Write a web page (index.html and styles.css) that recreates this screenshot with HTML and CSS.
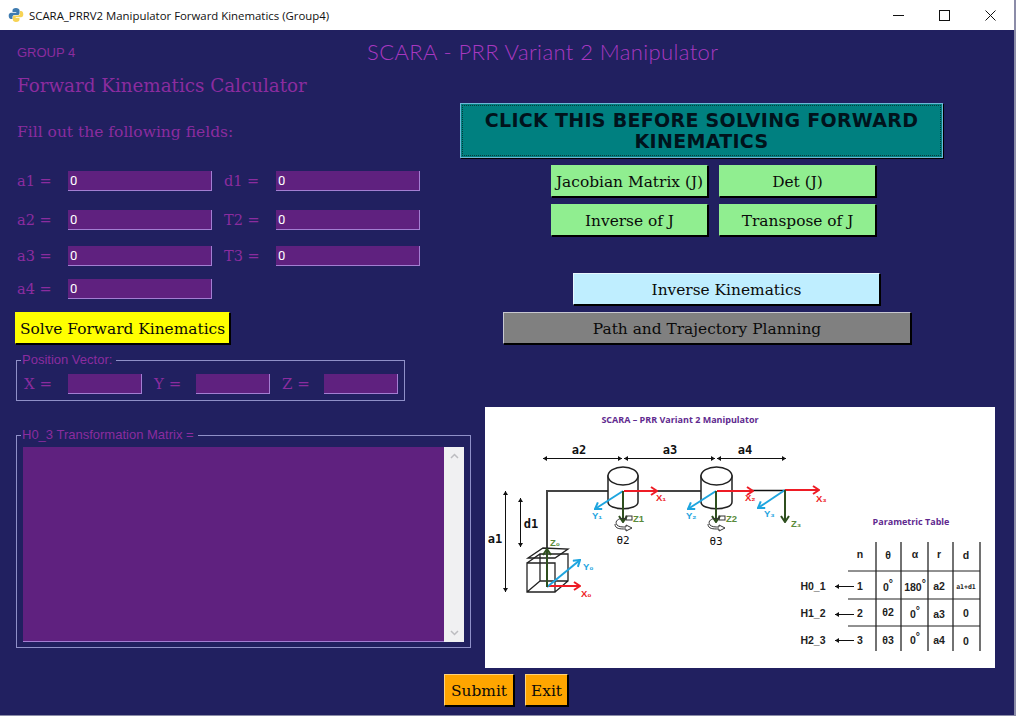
FILE: index.html
```html
<!DOCTYPE html>
<html lang="en">
<head>
    <meta charset="UTF-8">
    <title>SCARA_PRRV2 Manipulator Forward Kinematics (Group4)</title>
    <link rel="stylesheet" href="styles.css">
</head>
<body>
<div class="window">
    <div class="titlebar">
        <svg class="app-icon" width="16" height="16" viewBox="0 0 16 16">
            <path fill="#3f7cb0" d="M8 1C5.500 1 4.500 2 4.500 3.500V5H8.300V5.700H3C1.500 5.700 .7 7 .7 8.800S1.500 12 3 12H4.500V10C4.500 8.800 5.400 8 6.500 8H9.700C10.700 8 11.500 7.200 11.500 6.200V3.500C11.500 2 10 1 8 1Z"/>
            <path fill="#f7d354" d="M8 15C10.500 15 11.500 14 11.500 12.500V11H7.700V10.300H13C14.500 10.300 15.300 9 15.300 7.200S14.500 4 13 4H12V6.200C12 7.500 11 8.500 9.700 8.500H6.500C5.500 8.500 4.800 9.200 4.800 10.200V12.500C4.800 14 6 15 8 15Z"/>
        </svg>
        <span class="window-title">SCARA_PRRV2 Manipulator Forward Kinematics (Group4)</span>
        <div class="window-controls">
            <svg width="11" height="11" viewBox="0 0 11 11"><path d="M0 5.500H11" stroke="#111" fill="none"/></svg>
            <svg width="11" height="11" viewBox="0 0 11 11"><rect x=".5" y=".5" width="10" height="10" stroke="#111" fill="none"/></svg>
            <svg width="11" height="11" viewBox="0 0 11 11"><path d="M.5 .5L10.500 10.500M10.500 .5L.5 10.500" stroke="#111" fill="none"/></svg>
        </div>
    </div>

    <div class="content">
        <div class="header">
            <span class="group-label">GROUP 4</span>
            <h1 class="app-title">SCARA - PRR Variant 2 Manipulator</h1>
        </div>

        <div class="columns">
            <div class="left-col">
                <h2 class="calc-title">Forward Kinematics Calculator</h2>
                <p class="fill-text">Fill out the following fields:</p>

                <div class="field-row first">
                    <label class="field-label">a1 =</label>
                    <input class="field" type="text" value="0">
                    <label class="field-label second">d1 =</label>
                    <input class="field" type="text" value="0">
                </div>
                <div class="field-row row-2">
                    <label class="field-label">a2 =</label>
                    <input class="field" type="text" value="0">
                    <label class="field-label second">T2 =</label>
                    <input class="field" type="text" value="0">
                </div>
                <div class="field-row row-3">
                    <label class="field-label">a3 =</label>
                    <input class="field" type="text" value="0">
                    <label class="field-label second">T3 =</label>
                    <input class="field" type="text" value="0">
                </div>
                <div class="field-row row-4">
                    <label class="field-label">a4 =</label>
                    <input class="field" type="text" value="0">
                </div>

                <button class="btn btn-solve">Solve Forward Kinematics</button>

                <fieldset class="group-box position-box">
                    <legend>Position Vector:</legend>
                    <label class="vec-label">X =</label>
                    <input class="field vec-field" type="text">
                    <label class="vec-label">Y =</label>
                    <input class="field vec-field" type="text">
                    <label class="vec-label">Z =</label>
                    <input class="field vec-field" type="text">
                </fieldset>

                <fieldset class="group-box matrix-box">
                    <legend>H0_3 Transformation Matrix =</legend>
                    <div class="matrix-area"></div>
                    <div class="scrollbar">
                        <svg width="9" height="6" viewBox="0 0 9 6"><path d="M1 5L4.500 1.500L8 5" stroke="#bcbcc0" stroke-width="1.500" fill="none"/></svg>
                        <svg width="9" height="6" viewBox="0 0 9 6"><path d="M1 1L4.500 4.500L8 1" stroke="#bcbcc0" stroke-width="1.500" fill="none"/></svg>
                    </div>
                </fieldset>
            </div>

            <div class="right-col">
                <button class="btn btn-click">CLICK THIS BEFORE SOLVING FORWARD<br>KINEMATICS</button>
                <div class="jacobian-grid">
                    <button class="btn btn-green">Jacobian Matrix (J)</button>
                    <button class="btn btn-green">Det (J)</button>
                    <button class="btn btn-green">Inverse of J</button>
                    <button class="btn btn-green">Transpose of J</button>
                </div>
                <button class="btn btn-inverse">Inverse Kinematics</button>
                <button class="btn btn-path">Path and Trajectory Planning</button>

                <svg class="diagram" width="510" height="261" viewBox="0 0 510 261">
                    <defs>
                        <marker id="head-red" markerWidth="8" markerHeight="10" refX="7" refY="5" orient="auto" markerUnits="userSpaceOnUse"><path d="M1 1L7 5L1 9" fill="none" stroke="#ee1c25" stroke-width="2"/></marker>
                        <marker id="head-blue" markerWidth="8" markerHeight="10" refX="7" refY="5" orient="auto" markerUnits="userSpaceOnUse"><path d="M1 1L7 5L1 9" fill="none" stroke="#1ea5df" stroke-width="2"/></marker>
                        <marker id="head-green" markerWidth="8" markerHeight="10" refX="7" refY="5" orient="auto" markerUnits="userSpaceOnUse"><path d="M1 1L7 5L1 9" fill="none" stroke="#2f4f1f" stroke-width="2"/></marker>
                        <marker id="dim-end" markerWidth="5" markerHeight="5" refX="4" refY="2.500" orient="auto-start-reverse" markerUnits="userSpaceOnUse"><path d="M0 0L4 2.500L0 5Z" fill="#111"/></marker>
                    </defs>

                    <text class="dg-heading" x="195" y="16" text-anchor="middle">SCARA – PRR Variant 2 Manipulator</text>

                    <!-- dimension lines -->
                    <g stroke="#111" fill="none">
                        <path d="M58 51.500H137" marker-start="url(#dim-end)" marker-end="url(#dim-end)"/>
                        <path d="M139 51.500H230" marker-start="url(#dim-end)" marker-end="url(#dim-end)"/>
                        <path d="M232 51.500H301" marker-start="url(#dim-end)" marker-end="url(#dim-end)"/>
                        <path d="M35.500 91V140" marker-start="url(#dim-end)" marker-end="url(#dim-end)"/>
                        <path d="M20.500 84V185" marker-start="url(#dim-end)" marker-end="url(#dim-end)"/>
                    </g>
                    <text class="dg-dim" x="94" y="47" text-anchor="middle">a2</text>
                    <text class="dg-dim" x="185" y="47" text-anchor="middle">a3</text>
                    <text class="dg-dim" x="260" y="47" text-anchor="middle">a4</text>
                    <text class="dg-dim" x="46" y="121" text-anchor="middle">d1</text>
                    <text class="dg-dim" x="10" y="136" text-anchor="middle">a1</text>

                    <!-- arm -->
                    <path d="M62 180V84H123M153 84H216" stroke="#444" stroke-width="2" fill="none"/>
                    <path d="M266 83.500H300" stroke="#111" stroke-width="1.500" fill="none"/>

                    <!-- base -->
                    <g stroke="#222" stroke-width="1.300" fill="none">
                        <path d="M42 156H70V185H42ZM42 156L55 147H83V174L70 185M55 147V174H83M55 174L42 185"/>
                        <path d="M43 151L58 141L83 142L70 151Z"/>
                    </g>

                    <!-- joints -->
                    <g stroke="#222" stroke-width="1.500" fill="#fff">
                        <path d="M123 69V95C123 104 153 104 153 95V69Z"/>
                        <ellipse cx="138" cy="69" rx="15" ry="9"/>
                        <path d="M216 69V95C216 104 247 104 247 95V69Z"/>
                        <ellipse cx="231.500" cy="69" rx="15.500" ry="9"/>
                    </g>

                    <!-- frame axes -->
                    <g fill="none" stroke-width="2">
                        <path d="M62 179H95" stroke="#ee1c25" marker-end="url(#head-red)"/>
                        <path d="M62 180L95 153" stroke="#1ea5df" marker-end="url(#head-blue)"/>
                        <path d="M62 180V142" stroke="#2f4f1f" marker-end="url(#head-green)"/>
                        <path d="M139 84H172" stroke="#ee1c25" marker-end="url(#head-red)"/>
                        <path d="M138 84L110 102" stroke="#1ea5df" marker-end="url(#head-blue)"/>
                        <path d="M138 84V115" stroke="#2f4f1f" marker-end="url(#head-green)"/>
                        <path d="M232 84H268" stroke="#ee1c25" marker-end="url(#head-red)"/>
                        <path d="M231 84L203 102" stroke="#1ea5df" marker-end="url(#head-blue)"/>
                        <path d="M231 84V115" stroke="#2f4f1f" marker-end="url(#head-green)"/>
                        <path d="M300 83H334" stroke="#ee1c25" marker-end="url(#head-red)"/>
                        <path d="M300 83L273 101" stroke="#1ea5df" marker-end="url(#head-blue)"/>
                        <path d="M300 83V115" stroke="#2f4f1f" marker-end="url(#head-green)"/>
                    </g>

                    <!-- rotation marks -->
                    <g stroke="#333" fill="none" stroke-width="1">
                        <path d="M142 112C134 110 129 114 132 118C134 120 137 120 141 120V118L147 121L141 124V122C135 122 130 122 130 117"/>
                        <rect x="141" y="109" width="6" height="4"/>
                        <path d="M235 112C227 110 222 114 225 118C227 120 230 120 234 120V118L240 121L234 124V122C228 122 223 122 223 117"/>
                        <rect x="234" y="109" width="6" height="4"/>
                    </g>

                    <text class="dg-axis red" x="171" y="94">X₁</text>
                    <text class="dg-axis blue" x="107" y="112">Y₁</text>
                    <text class="dg-axis olive" x="148" y="115">Z1</text>
                    <text class="dg-axis red" x="260" y="94">X₂</text>
                    <text class="dg-axis blue" x="201" y="112">Y₂</text>
                    <text class="dg-axis olive" x="241" y="115">Z2</text>
                    <text class="dg-axis red" x="331" y="95">X₃</text>
                    <text class="dg-axis blue" x="279" y="110">Y₃</text>
                    <text class="dg-axis olive" x="306" y="120">Z₃</text>
                    <text class="dg-axis olive" x="65" y="139">Z₀</text>
                    <text class="dg-axis blue" x="98" y="163">Y₀</text>
                    <text class="dg-axis red" x="96" y="190">X₀</text>
                    <text class="dg-dim small" x="138" y="137" text-anchor="middle">θ2</text>
                    <text class="dg-dim small" x="231" y="138" text-anchor="middle">θ3</text>

                    <!-- parametric table -->
                    <text class="dg-heading" x="426" y="118" text-anchor="middle">Parametric Table</text>
                    <path d="M391 135V244M416 135V244M443 135V244M468 135V244M495 135V244" stroke="#444" stroke-width="1.500" fill="none"/>
                    <path d="M363 164H495M363 192H495M363 219H495" stroke="#222" fill="none"/>
                    <g class="dg-table" text-anchor="middle">
                        <text x="375" y="151">n</text>
                        <text x="403" y="152">θ</text>
                        <text x="430" y="151">α</text>
                        <text x="454" y="151">r</text>
                        <text x="481" y="152">d</text>
                        <text x="375" y="183">1</text>
                        <text x="403" y="184">0<tspan dy="-4">°</tspan></text>
                        <text x="430" y="184">180<tspan dy="-4">°</tspan></text>
                        <text x="454" y="183">a2</text>
                        <text class="dg-tiny" x="481" y="182">a1+d1</text>
                        <text x="375" y="210">2</text>
                        <text x="403" y="209">θ2</text>
                        <text x="430" y="211">0<tspan dy="-4">°</tspan></text>
                        <text x="454" y="211">a3</text>
                        <text x="481" y="210">0</text>
                        <text x="375" y="237">3</text>
                        <text x="403" y="237">θ3</text>
                        <text x="430" y="237">0<tspan dy="-4">°</tspan></text>
                        <text x="454" y="237">a4</text>
                        <text x="481" y="238">0</text>
                        <text x="328" y="183">H0_1</text>
                        <text x="328" y="210">H1_2</text>
                        <text x="328" y="237">H2_3</text>
                    </g>
                    <g stroke="#111" fill="none">
                        <path d="M369 179.500H350" marker-end="url(#dim-end)"/>
                        <path d="M369 207.500H350" marker-end="url(#dim-end)"/>
                        <path d="M369 233.500H350" marker-end="url(#dim-end)"/>
                    </g>
                </svg>
            </div>
        </div>

        <div class="footer">
            <button class="btn btn-orange">Submit</button>
            <button class="btn btn-orange">Exit</button>
        </div>
    </div>
</div>
</body>
</html>
```

FILE: styles.css
```css
html, body {
    margin: 0;
    height: 716px;
    overflow: hidden;
}
.window {
    display: flex;
    flex-direction: column;
    height: 716px;
    background-color: #212060;
    font-family: "Liberation Sans", sans-serif;
    border-right: 2px solid #8b8ca8;
    border-bottom: 1px solid #8b8ca8;
    box-sizing: border-box;
}
.titlebar {
    display: flex;
    align-items: center;
    height: 30px;
    flex-shrink: 0;
    background-color: #ffffff;
    padding-left: 8px;
}
.app-icon {
    margin-right: 5px;
}
.window-title {
    font-family: "Open Sans", sans-serif;
    font-size: 11.400px;
    color: #111;
    white-space: nowrap;
}
.window-controls {
    display: flex;
    gap: 35px;
    margin-left: auto;
    margin-right: 18px;
}
.content {
    flex: 1;
}
.header {
    display: flex;
    align-items: center;
    height: 44px;
    padding-left: 17px;
}
.group-label {
    width: 350px;
    font-family: "Liberation Sans", sans-serif;
    font-size: 13px;
    color: #8b2c9f;
}
.app-title {
    margin: 0 0 2px;
    font-family: "Lato", sans-serif;
    font-size: 22px;
    font-weight: 300;
    letter-spacing: .4px;
    color: #a838c0;
    white-space: nowrap;
}
.columns {
    display: flex;
}
.left-col {
    width: 460px;
    flex-shrink: 0;
    padding-left: 17px;
    box-sizing: border-box;
    color: #8b2c9f;
}
.calc-title {
    margin: 0;
    height: 24px;
    font-family: "DejaVu Serif", serif;
    font-size: 18.300px;
    line-height: 24px;
    font-weight: 400;
    white-space: nowrap;
}
.fill-text {
    margin: 23px 0 0;
    height: 22px;
    font-family: "DejaVu Serif", serif;
    font-size: 15.500px;
    line-height: 22px;
    white-space: nowrap;
}
.field-row {
    display: flex;
    align-items: center;
    height: 20px;
}
.field-row.first { margin-top: 28px; }
.field-row.row-2 { margin-top: 19px; }
.field-row.row-3 { margin-top: 16px; }
.field-row.row-4 { margin-top: 13px; }
.field-label {
    width: 51px;
    font-family: "DejaVu Serif", serif;
    font-size: 14.500px;
    white-space: nowrap;
}
.field-label.second {
    width: 52px;
    margin-left: 12px;
}
.field {
    width: 144px;
    height: 20px;
    box-sizing: border-box;
    padding: 0 0 0 2px;
    border: 0;
    border-right: 1px solid #a37ed2;
    border-bottom: 1px solid #a37ed2;
    background-color: #5f217f;
    color: #ffffff;
    font-family: "Roboto", sans-serif;
    font-size: 13px;
}
.btn {
    display: block;
    box-sizing: border-box;
    padding: 1px 0 0;
    border: 1px solid #000;
    border-top-color: #e8e8e8;
    border-left-color: #e8e8e8;
    box-shadow: 1px 1px 0 #000;
    font-family: "DejaVu Serif", serif;
    font-size: 15.400px;
    color: #0a0a0a;
    white-space: nowrap;
}
.btn-solve {
    width: 215px;
    height: 32px;
    margin: 13px 0 0 -2px;
    background-color: #ffff00;
    border-top-color: #ffff00;
    border-left-color: #ffff00;
}
.group-box {
    margin: 0;
    padding: 0;
    min-width: 0;
    border: 1px solid #8f90c8;
    box-sizing: border-box;
}
.group-box legend {
    margin-left: -3px;
    padding: 0 4px 0 1px;
    font-size: 13px;
    line-height: 14px;
    color: #8b2c9f;
}
.position-box {
    display: flex;
    align-items: center;
    width: 389px;
    height: 48px;
    margin: 9px 0 0 -1px;
    padding-left: 7px;
}
.vec-label {
    width: 44px;
    flex-shrink: 0;
    font-family: "DejaVu Serif", serif;
    font-size: 15px;
    white-space: nowrap;
}
.vec-label ~ .vec-label {
    width: 42px;
    margin-left: 12px;
}
.vec-field {
    width: 74px;
    flex-shrink: 0;
}
.matrix-box {
    display: flex;
    width: 455px;
    height: 220px;
    margin: 27px 0 0 -1px;
    padding: 5px 6px;
}
.matrix-box legend {
    margin-left: -2px;
}
.matrix-area {
    flex: 1;
    background-color: #5f217f;
    border-bottom: 1px solid #a37ed2;
}
.scrollbar {
    display: flex;
    flex-direction: column;
    justify-content: space-between;
    align-items: center;
    width: 20px;
    padding: 6px 0;
    box-sizing: border-box;
    background-color: #f0f0f2;
}
.right-col {
    flex: 1;
}
.btn-click {
    width: 483px;
    height: 55px;
    margin-top: 29px;
    background-color: #008080;
    border-color: #6fb6d6;
    outline: 1px dotted #0a3a3a;
    outline-offset: -3px;
    font-family: "DejaVu Sans", sans-serif;
    font-size: 19px;
    font-weight: 700;
    letter-spacing: .3px;
    line-height: 21px;
    color: #00131c;
}
.jacobian-grid {
    display: grid;
    grid-template-columns: 157px 157px;
    grid-auto-rows: 32px;
    gap: 7px 11px;
    margin: 7px 0 0 91px;
}
.btn-green {
    background-color: #90ee90;
    border-color: #90ee90;
    border-right-color: #000;
    border-bottom-color: #000;
}
.btn-inverse {
    width: 307px;
    height: 32px;
    margin: 37px 0 0 113px;
    background-color: #bfeeff;
    border-color: #e8f8ff;
    border-right-color: #000;
    border-bottom-color: #000;
}
.btn-path {
    width: 408px;
    height: 32px;
    margin: 7px 0 0 43px;
    background-color: #808080;
    border-color: #c8c8d0;
    border-right-color: #000;
    border-bottom-color: #000;
}
.diagram {
    display: block;
    margin: 63px 0 0 25px;
    background-color: #ffffff;
}
.dg-heading {
    font-family: "Open Sans", sans-serif;
    font-size: 9px;
    font-weight: 700;
    fill: #5f2a8f;
}
.dg-dim {
    font-family: "DejaVu Sans Mono", monospace;
    font-size: 12px;
    font-weight: 700;
    fill: #111;
}
.dg-dim.small {
    font-size: 11px;
    font-weight: 400;
}
.dg-axis {
    font-family: "Liberation Sans", "DejaVu Sans", sans-serif;
    font-size: 9.500px;
    font-weight: 700;
}
.dg-axis.red { fill: #ee1c25; }
.dg-axis.blue { fill: #1ea5df; }
.dg-axis.olive { fill: #5a8a3a; }
.dg-table text {
    font-family: "Liberation Sans", sans-serif;
    font-size: 10.500px;
    font-weight: 700;
    fill: #222;
}
.dg-table .dg-tiny {
    font-family: "DejaVu Sans Mono", monospace;
    font-size: 6.500px;
}
.footer {
    display: flex;
    gap: 11px;
    margin: 6px 0 0 444px;
}
.btn-orange {
    width: 70px;
    height: 32px;
    background-color: #ffa500;
    border-color: #ffd27a;
    border-right-color: #000;
    border-bottom-color: #000;
}
.btn-orange + .btn-orange {
    width: 43px;
}
```
